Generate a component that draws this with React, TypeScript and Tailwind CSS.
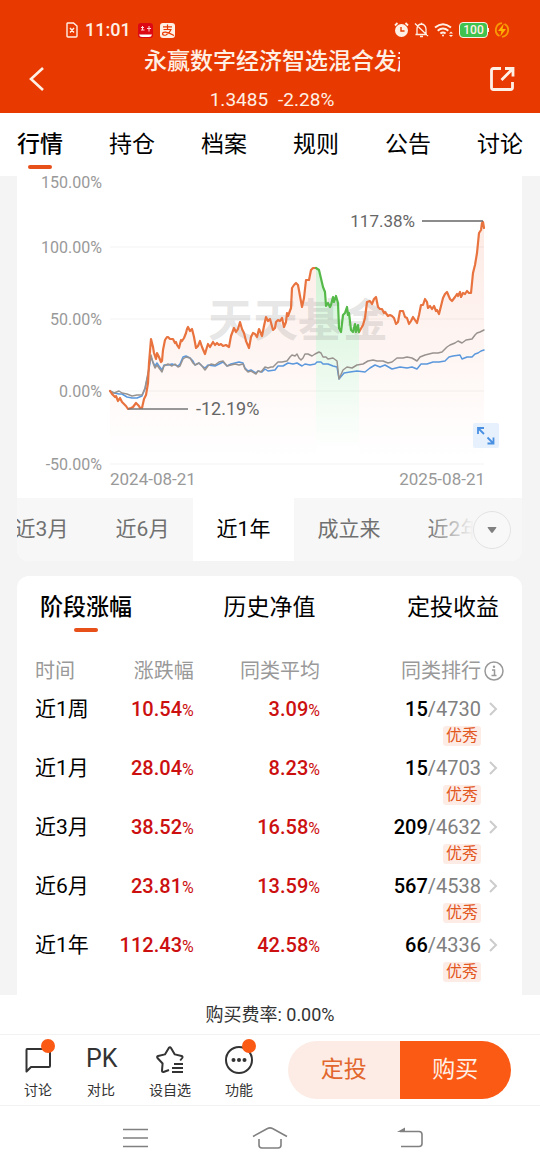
import React, { useState } from "react";

const tabs = ["行情", "持仓", "档案", "规则", "公告", "讨论"];
const periods = ["近3月", "近6月", "近1年", "成立来", "近2年"];
const panels = ["阶段涨幅", "历史净值", "定投收益"];

const rows = [
  { label: "近1周", change: "10.54", average: "3.09", rank: 15, total: 4730 },
  { label: "近1月", change: "28.04", average: "8.23", rank: 15, total: 4703 },
  { label: "近3月", change: "38.52", average: "16.58", rank: 209, total: 4632 },
  { label: "近6月", change: "23.81", average: "13.59", rank: 567, total: 4538 },
  { label: "近1年", change: "112.43", average: "42.58", rank: 66, total: 4336 },
];

const axis = [
  { y: 182, label: "150.00%" },
  { y: 247, label: "100.00%" },
  { y: 319, label: "50.00%" },
  { y: 391, label: "0.00%" },
  { y: 464, label: "-50.00%" },
];

const fundStart =
  "110,391 112,394 115,397 116,396 118,401 120,398 122,402 124,404 126,406 128,409 131,408 133,407 136,403 139,406 140,408 142,408 144,399 146,395 148,383 149,363 151,339 153,347 154,353 156,359 157,353 159,357 161,362 162,361 163,350 165,340 167,337 168,337 170,339 173,339 175,343 176,342 177,345 179,348 181,340 182,341 184,338 186,333 187,329 188,327 190,331 192,329 194,337 196,348 198,346 200,341 202,347 205,354 207,347 208,344 210,347 213,342 215,345 217,343 219,345 221,344 223,346 226,345 229,347 231,336 234,328 236,332 238,329 240,322 242,329 244,333 246,341 249,348 251,337 253,333 255,334 257,337 259,329 262,336 264,326 266,317 268,321 270,319 273,330 275,328 276,322 278,320 280,321 282,318 284,327 286,322 287,313 288,316 291,308 292,288 294,285 296,283 298,285 302,307 304,298 306,280 309,280 311,270 313,268 316,268";
const fundDrop =
  "316,268 319,270 323,287 325,292 326,306 328,303 330,307 331,305 333,297 334,302 336,296 338,303 339,328 341,332 343,315 345,313 347,307 348,315 349,313 351,330 353,332 355,324 356,332 358,325 359,332";
const fundEnd =
  "359,332 363,325 365,318 367,302 370,301 372,304 374,299 376,297 378,307 380,309 382,309 384,313 385,312 388,316 390,315 392,316 394,318 396,324 398,322 400,311 403,311 405,317 407,318 409,324 411,321 413,317 415,320 417,323 419,315 421,305 423,305 425,299 427,302 428,308 430,306 432,309 434,306 436,311 437,310 439,314 441,306 443,298 445,294 447,292 450,299 452,301 455,297 457,294 458,296 460,292 461,297 463,293 465,294 467,291 469,293 471,293 473,273 475,265 477,253 479,233 481,230 482,223 483,222 484,228";
const averageLine =
  "110,391 114,393 119,391 122,393 127,394 132,396 137,395 142,395 145,388 148,373 151,355 153,363 155,368 157,365 159,368 162,372 164,366 168,364 172,366 175,364 178,367 180,366 183,359 186,357 190,358 193,363 195,365 199,363 202,366 205,370 208,366 211,364 215,365 219,362 223,361 227,366 231,365 235,364 239,365 243,364 245,369 248,372 251,371 256,374 258,371 261,372 265,367 268,368 271,367 273,367 276,364 278,362 282,362 287,361 290,357 292,355 295,356 297,354 299,358 301,360 303,358 305,354 308,354 312,356 315,354 319,352 321,353 323,357 326,357 328,359 333,358 337,361 339,379 343,370 347,367 352,368 357,365 363,364 368,361 373,360 377,361 383,361 388,363 392,362 397,358 403,358 407,357 412,358 417,361 420,357 425,355 433,353 438,353 442,352 447,347 450,345 455,343 458,341 462,343 466,340 472,339 475,335 477,333 480,332 484,330";
const indexLine =
  "110,391 114,393 119,394 122,394 127,397 132,398 137,398 142,396 145,389 148,375 151,357 153,362 155,366 157,363 159,366 162,370 164,365 168,365 172,364 178,366 180,364 183,357 186,356 190,358 193,361 195,365 199,363 202,366 205,368 208,365 215,366 223,362 227,366 231,364 235,363 239,362 243,363 245,368 248,371 251,370 256,373 258,371 262,372 265,369 268,371 275,370 278,366 283,366 288,363 293,364 297,363 302,366 305,364 310,365 315,364 317,362 321,362 323,364 328,364 333,366 337,367 339,379 344,373 350,372 357,371 365,372 370,368 375,365 380,367 385,365 392,369 400,367 407,368 412,367 417,369 421,364 427,364 433,362 439,362 445,361 449,357 453,356 460,355 462,359 467,357 472,357 475,354 478,353 481,351 484,350";

function FundChart() {
  return (
    <svg
      viewBox="17 176 505 322"
      className="block w-full overflow-visible"
      role="img"
      aria-label="近1年收益走势"
    >
      <defs>
        <linearGradient id="fundFill" x1="0" y1="222" x2="0" y2="458" gradientUnits="userSpaceOnUse">
          <stop offset="0" stopColor="#fdeae4" />
          <stop offset="1" stopColor="#ffffff" />
        </linearGradient>
        <linearGradient id="dropFill" x1="0" y1="268" x2="0" y2="452" gradientUnits="userSpaceOnUse">
          <stop offset="0" stopColor="#d2f3d6" />
          <stop offset="1" stopColor="#ffffff" />
        </linearGradient>
      </defs>

      <polygon points={`${fundStart} 316,460 110,460`} fill="url(#fundFill)" />
      <polygon points={`${fundEnd} 484,460 359,460`} fill="url(#fundFill)" />
      <polygon points={`${fundDrop} 359,460 316,460`} fill="url(#dropFill)" />

      <text
        x="208"
        y="337"
        fontSize="45"
        fontWeight="700"
        fill="#808080"
        fillOpacity="0.2"
      >
        天天基金
      </text>

      {axis.map(({ y, label }) => (
        <g key={label}>
          {y > 200 && <line x1="110" x2="484" y1={y} y2={y} stroke="#000" strokeOpacity="0.05" />}
          <text x="102" y={y + 6} textAnchor="end" fontSize="16" fill="#999999">
            {label}
          </text>
        </g>
      ))}

      {/* Benchmarks first, fund line on top */}
      <g fill="none" strokeLinejoin="round" strokeLinecap="round">
        <polyline points={indexLine} stroke="#5a97dc" strokeWidth="1.5" />
        <polyline points={averageLine} stroke="#999390" strokeWidth="1.5" />
        <polyline points={fundStart} stroke="#e9733f" strokeWidth="2.2" />
        <polyline points={fundEnd} stroke="#e9733f" strokeWidth="2.2" />
        <polyline points={fundDrop} stroke="#54b948" strokeWidth="2.2" />
      </g>

      <line x1="422" x2="483" y1="221" y2="221" stroke="#666666" strokeWidth="1.5" />
      <text x="415" y="227" textAnchor="end" fontSize="17" fill="#666666">
        117.38%
      </text>
      <line x1="128" x2="188" y1="409" y2="409" stroke="#777777" strokeWidth="1.5" />
      <text x="196" y="415" fontSize="18" fill="#666666">
        -12.19%
      </text>

      <text x="110" y="485" fontSize="17" fill="#999999">
        2024-08-21
      </text>
      <text x="485" y="485" textAnchor="end" fontSize="17" fill="#999999">
        2025-08-21
      </text>

      <rect x="473" y="423" width="26" height="25" rx="2" fill="#e7f1fd" />
      <g fill="none" stroke="#4a90e2" strokeWidth="1.8">
        <path d="M478 434v-6h6M478 428l6 6M487.500 443.500h6v-6M493.500 443.500l-6-6" />
      </g>
    </svg>
  );
}

function StatusBar() {
  return (
    <div className="flex h-6 items-center justify-between pr-[30px] pl-[66px] text-[#fff0e6]">
      <div className="flex items-center gap-[7px]">
        <svg width="12" height="16" viewBox="0 0 12 16" fill="none" stroke="currentColor" strokeWidth="1.4">
          <path d="M1.500 1h6l3.500 3v10q0 1-1 1h-8q-1 0-1-1v-12q0-1 .5-1zM4 6l4 4.500M8 6l-4 4.500" />
        </svg>
        <span className="text-[18px] leading-6 font-medium">11:01</span>
        <svg width="15" height="15" viewBox="0 0 15 15">
          <rect width="15" height="15" rx="3" fill="#dc0814" />
          <path d="M3 4.500h3M4.500 3v4M3 7h3.500M9 5.500h4M11 3v5.500" stroke="#ffd5d5" strokeWidth="1" fill="none" />
          <path d="M1 11.500h13q-.5 2.500-3 2.500H4q-2.500 0-3-2.500z" fill="#fff" />
        </svg>
        <svg width="15" height="15" viewBox="0 0 15 15" fill="none">
          <rect width="15" height="15" rx="3" fill="#fff0e6" />
          <path d="M3 3.800h9M7.500 1.500v5M3.500 6.500h7.500q-1.500 4-5 5.500-3 .8-3.500-1 .2-2 3-1.800 3 .5 8.500 3.300" stroke="#e83a00" strokeWidth="1.200" />
        </svg>
      </div>
      <div className="flex items-center gap-[5px]">
        <svg width="15" height="16" viewBox="0 0 15 16" fill="none">
          <circle cx="7.500" cy="8.500" r="6.500" fill="currentColor" />
          <path d="M1 3.500L3.500 1M14 3.500L11.500 1" stroke="currentColor" strokeWidth="1.800" />
          <path d="M7 5v4h3.500" stroke="#e83a00" strokeWidth="1.400" />
        </svg>
        <svg width="15" height="16" viewBox="0 0 15 16" fill="none" stroke="currentColor" strokeWidth="1.300">
          <path d="M1.500 12.500h11.500M3 12V7q0-4.500 4.500-5 4 .5 4.500 5v5M7.500 2V.8M6 14.500h3M1 1.500l13 12.500" />
        </svg>
        <svg width="20" height="16" viewBox="0 0 20 16" fill="none" stroke="currentColor" strokeWidth="2">
          <path d="M1 5.500q8-6.500 16 0M3.700 8.700q5.300-4.400 10.600 0M6.400 11.500q2.600-2 5.200 0" />
          <circle cx="9" cy="13.500" r="1" fill="currentColor" stroke="none" />
          <path d="M15 11.500l2-2 2 2zM15 13l2 2 2-2z" fill="currentColor" stroke="none" />
        </svg>
        <div className="flex items-center">
          <span className="flex h-4 w-[29px] items-center justify-center rounded-[4px] border border-[#fff0e6] bg-[#3fc34e] text-[12px] leading-3 font-medium">
            100
          </span>
          <span className="h-1 w-px bg-[#fff0e6]" />
        </div>
        <svg width="16" height="16" viewBox="0 0 16 16" fill="none">
          <path d="M8 1.200A6.800 6.800 0 0 0 5.500 14M10.500 2A6.800 6.800 0 0 1 8 14.800" stroke="#f99a05" strokeWidth="1.800" />
          <path d="M9.800 1.500L4 9h3.500l-1.300 5.500L12 7H8.500z" fill="#ffb400" />
        </svg>
      </div>
    </div>
  );
}

function Header() {
  return (
    <header className="bg-[#e83a00] pt-[18px] pb-px text-[#fff0e6]">
      <StatusBar />
      <div className="mt-1 flex items-center justify-between pr-6 pl-7">
        <button aria-label="返回" className="w-7">
          <svg width="18" height="26" viewBox="0 0 18 26" fill="none" stroke="currentColor" strokeWidth="2.600">
            <path d="M15 2L3 13l12 11" />
          </svg>
        </button>
        <div className="flex w-64 flex-col gap-[10px]">
          <h1 className="overflow-hidden text-[23px] leading-8 font-medium whitespace-nowrap">
            永赢数字经济智选混合发起
          </h1>
          <p className="flex justify-center gap-[10px] text-[19px] leading-6">
            <span>1.3485</span>
            <span>-2.28%</span>
          </p>
        </div>
        <button aria-label="分享">
          <svg width="28" height="28" viewBox="0 0 28 28" fill="none" stroke="currentColor" strokeWidth="2.800">
            <path d="M13 3.500H5.500q-2 0-2 2v17q0 2 2 2h17q2 0 2-2V17M17 3.500h8v8M25 3.500L13.500 15" />
          </svg>
        </button>
      </div>
    </header>
  );
}

function StageTable() {
  return (
    <table className="w-full table-fixed">
      <colgroup>
        <col className="w-[16%]" />
        <col className="w-[19%]" />
        <col className="w-[25%]" />
        <col className="w-[40%]" />
      </colgroup>
      <thead>
        <tr className="h-12 text-[20px] text-[#999999]">
          <th className="pl-[18px] text-left font-normal">时间</th>
          <th className="text-right font-normal">涨跌幅</th>
          <th className="text-right font-normal">同类平均</th>
          <th className="pr-[18px] font-normal">
            <span className="flex items-center justify-end gap-[3px]">
              同类排行
              <svg width="20" height="20" viewBox="0 0 20 20" fill="none" stroke="currentColor" strokeWidth="1.500">
                <circle cx="10" cy="10" r="9" />
                <path d="M8 9h2.500v5.500M7.500 14.500h5" />
                <circle cx="10" cy="5.800" r="1.200" fill="currentColor" stroke="none" />
              </svg>
            </span>
          </th>
        </tr>
      </thead>
      <tbody>
        {rows.map((row) => (
          <tr key={row.label} className="align-top text-[20px] leading-7">
            <td className="pl-[18px] text-[21px] text-black">{row.label}</td>
            <td className="text-right font-medium text-[#cc1010]">
              {row.change}
              <span className="text-base font-normal">%</span>
            </td>
            <td className="text-right font-medium text-[#cc1010]">
              {row.average}
              <span className="text-base font-normal">%</span>
            </td>
            <td className="pr-[23px] pb-2">
              <div className="flex items-center justify-end gap-[6px]">
                <span className="text-[#808080]">
                  <b className="font-medium text-black">{row.rank}</b>/{row.total}
                </span>
                <svg width="12" height="16" viewBox="0 0 12 16" fill="none" stroke="#cccccc" strokeWidth="2">
                  <path d="M3 2l6 6-6 6" />
                </svg>
              </div>
              <div className="mt-[3px] flex justify-end pr-[18px]">
                <span className="rounded-[3px] bg-[#fdece6] px-[3px] text-base leading-5 text-[#e2571e]">
                  优秀
                </span>
              </div>
            </td>
          </tr>
        ))}
      </tbody>
    </table>
  );
}

function BottomBar() {
  const action = "relative flex flex-col items-center gap-[7px] pt-[3px] text-[14px] leading-[18px] text-[#333333]";
  return (
    <div className="flex items-center justify-between border-y border-[#f2f2f2] py-[6px] pr-[29px] pl-[23px]">
      <div className="flex gap-[33px]">
        <button className={action}>
          <svg width="30" height="30" viewBox="0 0 30 30" fill="none" stroke="currentColor" strokeWidth="2">
            <path d="M4 5h21q2 0 2 2v15q0 1-1 1H8l-4.500 4.500V6q0-1 .5-1z" strokeLinejoin="round" />
          </svg>
          讨论
          <i className="absolute top-[-2px] right-[-2px] size-[14px] rounded-full bg-[#fb5a15]" />
        </button>
        <button className={action}>
          <span className="w-[30px] text-[25px] leading-[30px]">PK</span>
          对比
        </button>
        <button className={action}>
          <svg width="30" height="30" viewBox="0 0 30 30" fill="none" stroke="currentColor" strokeWidth="2">
            <path d="M14 26l-5.500 2q-1.500.3-1.500-1.300l.6-7.200L2.500 14q-1-1.500.6-2l6.800-1.600L13.800 4q1.200-1.400 2.200 0l3.800 6.400L26.600 12q1.500.5.6 2l-2 2.500" strokeLinejoin="round" />
            <path d="M19 20h9M17 24h11M17 28h11" />
          </svg>
          设自选
        </button>
        <button className={action}>
          <svg width="30" height="30" viewBox="0 0 30 30" fill="none" stroke="currentColor" strokeWidth="2">
            <circle cx="15" cy="16" r="13" />
            <g fill="currentColor" stroke="none">
              <circle cx="9.500" cy="16" r="2" />
              <circle cx="15" cy="16" r="2" />
              <circle cx="20.500" cy="16" r="2" />
            </g>
          </svg>
          功能
          <i className="absolute top-[-2px] right-[-2px] size-[14px] rounded-full bg-[#fb5a15]" />
        </button>
      </div>
      <div className="flex h-[58px] w-[223px] overflow-hidden rounded-full text-[23px]">
        <button className="flex-1 bg-[#fcece5] text-[#e2662d]">定投</button>
        <button className="flex-1 bg-[#fb5a15] text-[#fff0e6]">购买</button>
      </div>
    </div>
  );
}

function SystemNav() {
  return (
    <nav className="flex h-16 items-center justify-between px-[117px] text-[#808080]">
      <button aria-label="菜单">
        <svg width="36" height="26" viewBox="0 0 36 26" fill="none" stroke="currentColor" strokeWidth="1.600">
          <path d="M6 4.500h25M6 13h25M6 21.500h25" />
        </svg>
      </button>
      <button aria-label="主页">
        <svg width="36" height="26" viewBox="0 0 36 26" fill="none" stroke="currentColor" strokeWidth="1.600">
          <path d="M1 11.500L15.500 3.500q2.500-1.300 5 0L35 11.500M7 14v6q0 3 3 3h16q3 0 3-3v-6" />
        </svg>
      </button>
      <button aria-label="后退">
        <svg width="36" height="26" viewBox="0 0 36 26" fill="none" stroke="currentColor" strokeWidth="1.600">
          <path d="M14 6.500h19q3 0 3 3v9q0 3-3 3H15" transform="translate(-1 0)" />
          <path d="M10 7l8-4.500V7z" fill="currentColor" stroke="none" />
        </svg>
      </button>
    </nav>
  );
}

export default function App() {
  const [tab, setTab] = useState("行情");
  const [period, setPeriod] = useState("近1年");
  const [panel, setPanel] = useState("阶段涨幅");

  return (
    <div className="bg-white font-['Roboto','Noto_Sans_CJK_SC',sans-serif]">
      <Header />

      {/* Section tabs */}
      <nav className="flex h-[63px] justify-between px-[17px] pt-[15px]">
        {tabs.map((name) => (
          <button
            key={name}
            onClick={() => setTab(name)}
            className={`flex flex-col items-center gap-[3px] text-[23px] leading-[34px] text-black ${
              tab === name ? "font-medium" : "font-normal"
            }`}
          >
            {name}
            {tab === name && <i className="h-1 w-6 rounded-full bg-[#e8501a]" />}
          </button>
        ))}
      </nav>

      <main className="bg-[#f4f4f4] pr-[18px] pl-[17px]">
        <section className="rounded-b-xl bg-white">
          <FundChart />
          <div className="relative flex h-[63px] overflow-hidden rounded-b-xl bg-[#f7f7f7]">
            {periods.map((name) => (
              <button
                key={name}
                onClick={() => setPeriod(name)}
                className={`w-[101px] shrink-0 text-[21px] first:-ml-[26px] nth-[4]:w-[110px] ${
                  period === name ? "bg-white text-black" : "text-[#707070]"
                }`}
              >
                {name}
              </button>
            ))}
            <div className="absolute inset-y-0 right-0 flex w-24 items-center justify-end bg-linear-to-r from-transparent to-[#f7f7f7] to-50% pr-[11px]">
              <button
                aria-label="更多区间"
                className="flex size-[38px] items-center justify-center rounded-full border border-[#e3e3e3] bg-[#f8f8f8]"
              >
                <svg width="10" height="8" viewBox="0 0 10 8" fill="#808080">
                  <path d="M1 1h8q.8.200.2 1L5.800 6.500q-.8.800-1.600 0L.8 2q-.6-.8.200-1z" />
                </svg>
              </button>
            </div>
          </div>
        </section>

        <section className="mt-[15px] rounded-t-xl bg-white pt-[15px] pb-[5px]">
          <div className="flex h-14 justify-between px-[23px]">
            {panels.map((name) => (
              <button
                key={name}
                onClick={() => setPanel(name)}
                className={`flex flex-col items-center gap-[3px] text-[23px] leading-[34px] text-black ${
                  panel === name ? "font-medium" : "font-normal"
                }`}
              >
                {name}
                {panel === name && <i className="h-1 w-6 rounded-full bg-[#e8501a]" />}
              </button>
            ))}
          </div>
          <StageTable />
        </section>
      </main>

      <footer>
        <p className="pt-[3px] pb-[2px] text-center text-[18px] leading-[34px] text-[#333333]">
          购买费率: 0.00%
        </p>
        <BottomBar />
        <SystemNav />
      </footer>
    </div>
  );
}
